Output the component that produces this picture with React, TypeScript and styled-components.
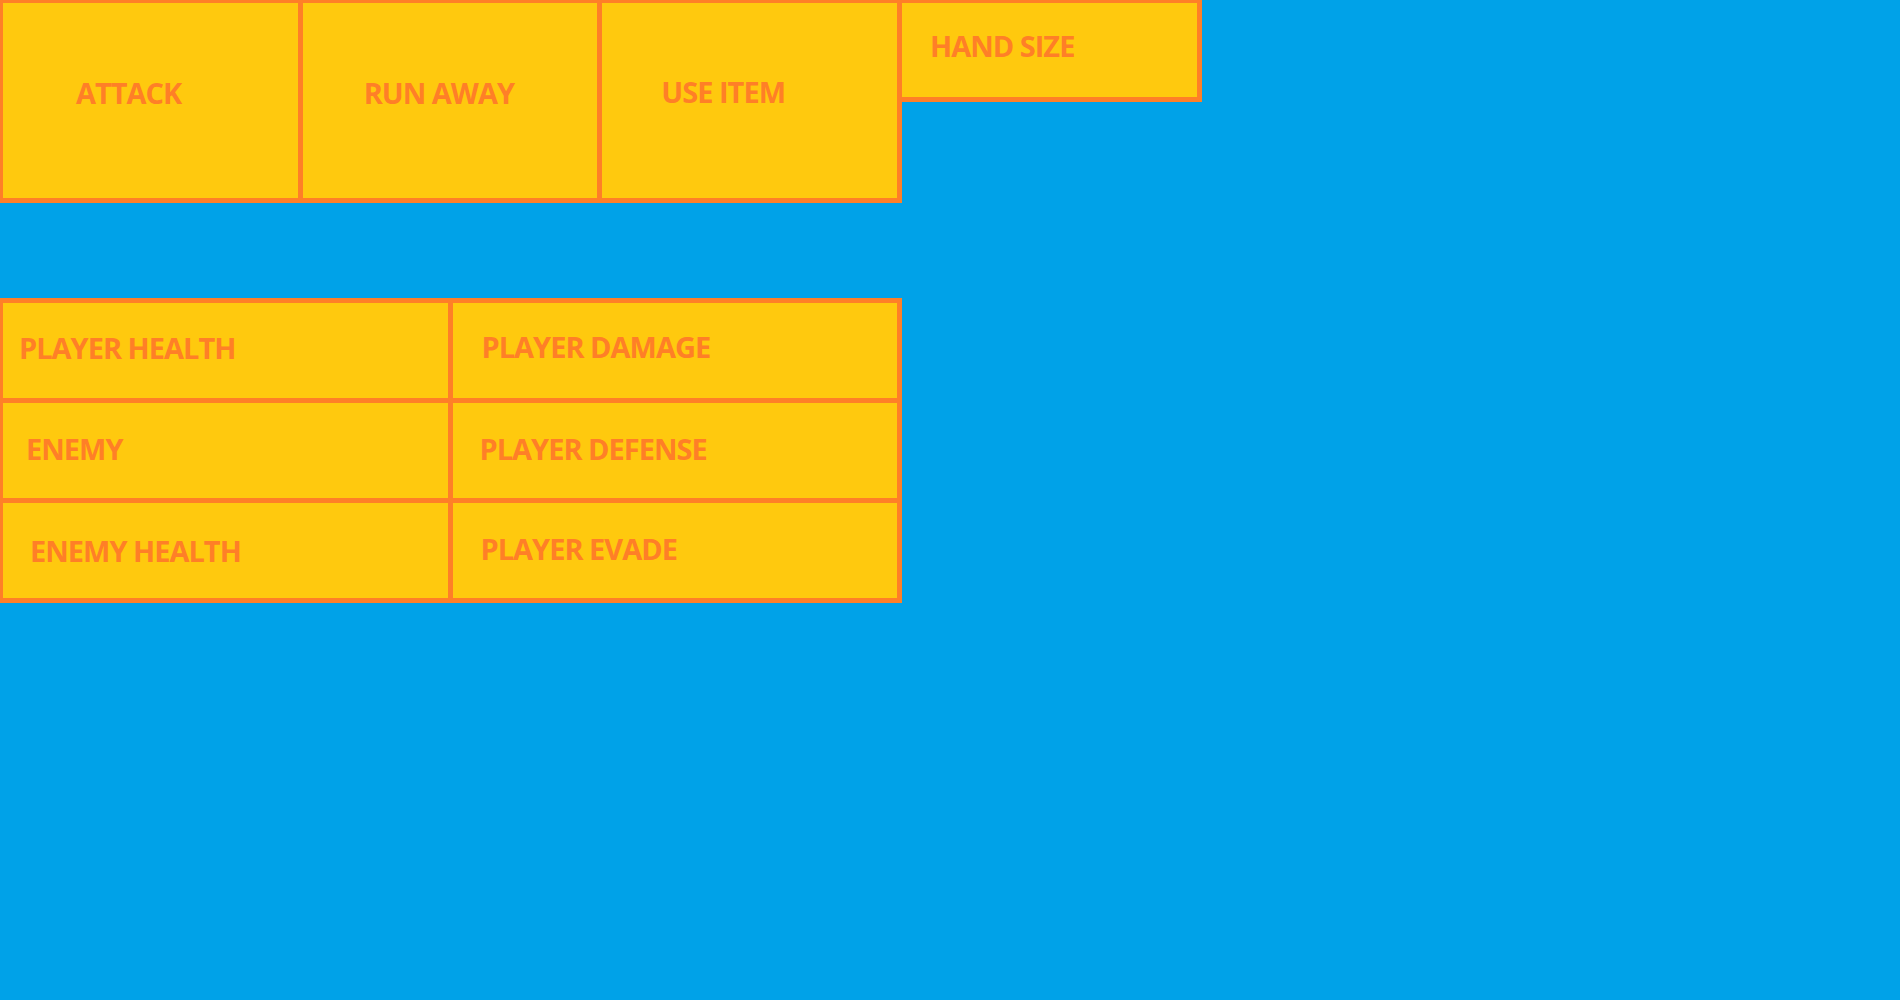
import styled, { createGlobalStyle } from 'styled-components';

const GlobalStyle = createGlobalStyle`
  html, body {
    margin: 0;
    padding: 0;
    height: 100%;
    background: #00a2e8;
    overflow: hidden;
  }
  #root {
    height: 100%;
  }
`;

const Screen = styled.div`
  height: 100%;
  margin: -2px 0 0 -2px;
  display: flex;
  flex-direction: column;
  gap: 95px;
  font-family: 'Open Sans', 'Liberation Sans', sans-serif;
`;

const TopBar = styled.div`
  display: flex;
  align-items: flex-start;
`;

// orange background + gap draws the shared borders between cells
const ActionGrid = styled.div`
  width: 904px;
  height: 205px;
  box-sizing: border-box;
  display: grid;
  grid-template-columns: repeat(3, 1fr);
  gap: 5px;
  padding: 5px;
  background: #ff7f27;
`;

const ActionCell = styled.div`
  background: #ffc90e;
`;

const HandSize = styled.div`
  width: 295px;
  height: 94px;
  border: 5px solid #ff7f27;
  border-left: none;
  background: #ffc90e;
`;

const StatGrid = styled.div`
  width: 904px;
  height: 305px;
  box-sizing: border-box;
  display: grid;
  grid-template-columns: repeat(2, 1fr);
  grid-template-rows: repeat(3, 1fr);
  gap: 5px;
  padding: 5px;
  background: #ff7f27;
`;

const StatCell = styled.div`
  background: #ffc90e;
`;

const Label = styled.div<{ $x: number; $y: number }>`
  padding: ${({ $y }) => $y}px 0 0 ${({ $x }) => $x}px;
  color: #ff7f27;
  font-size: 29px;
  font-weight: 700;
  line-height: 1;
  letter-spacing: -1px;
  white-space: nowrap;
`;

const actions = [
  { label: 'ATTACK', x: 73, y: 75 },
  { label: 'RUN AWAY', x: 61, y: 75 },
  { label: 'USE ITEM', x: 59, y: 74 },
];

const stats = [
  { label: 'PLAYER HEALTH', x: 16, y: 30 },
  { label: 'PLAYER DAMAGE', x: 29, y: 29 },
  { label: 'ENEMY', x: 23, y: 31 },
  { label: 'PLAYER DEFENSE', x: 27, y: 31 },
  { label: 'ENEMY HEALTH', x: 27, y: 33 },
  { label: 'PLAYER EVADE', x: 28, y: 31 },
];

function App() {
  return (
    <>
      <GlobalStyle />
      <Screen>
        <TopBar>
          <ActionGrid>
            {actions.map((a) => (
              <ActionCell key={a.label}>
                <Label $x={a.x} $y={a.y}>{a.label}</Label>
              </ActionCell>
            ))}
          </ActionGrid>
          <HandSize>
            <Label $x={28} $y={28}>HAND SIZE</Label>
          </HandSize>
        </TopBar>
        <StatGrid>
          {stats.map((s) => (
            <StatCell key={s.label}>
              <Label $x={s.x} $y={s.y}>{s.label}</Label>
            </StatCell>
          ))}
        </StatGrid>
      </Screen>
    </>
  );
}

export default App;
